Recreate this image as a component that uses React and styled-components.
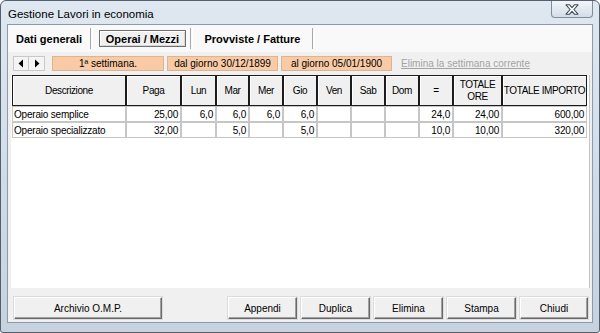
import React from "react";
import styled, { createGlobalStyle } from "styled-components";

const font = `"Liberation Sans", Arial, sans-serif`;

const GlobalStyle = createGlobalStyle`
  html, body {
    margin: 0;
    padding: 0;
    background: #ffffff;
  }
  body {
    font-family: ${font};
    font-size: 10px;
    color: #000;
  }
`;

const Window = styled.div`
  width: 600px;
  height: 333px;
  box-sizing: border-box;
  border: 1px solid #55606e;
  border-radius: 6px 6px 3px 3px;
  background: linear-gradient(180deg, #dfe8f0 0%, #cfdce8 55%, #c6d3df 100%);
  padding: 0 6px 9px 6px;
  display: flex;
  flex-direction: column;
  overflow: hidden;
`;

const TitleBar = styled.div`
  height: 23px;
  display: flex;
  align-items: flex-start;
  justify-content: space-between;
`;

const Title = styled.div`
  font-size: 11.5px;
  padding: 7px 0 0 1px;
  color: #000;
`;

const CloseBtn = styled.div`
  width: 42px;
  height: 17px;
  box-sizing: border-box;
  border: 1px solid #7f8c9c;
  border-top: none;
  border-radius: 0 0 4px 4px;
  background: linear-gradient(180deg, #f3f6f9 0%, #e2e9f0 50%, #d3dde7 100%);
  display: flex;
  align-items: center;
  justify-content: center;
`;

const Client = styled.div`
  flex: 1;
  border: 1px solid #8d9aa9;
  background: #f0f0f0;
  display: flex;
  flex-direction: column;
  min-height: 0;
`;

const TabStrip = styled.div`
  height: 27px;
  background: #f9f9f9;
  display: flex;
  align-items: center;
`;

const Tab = styled.div`
  width: ${(p) => p.w}px;
  display: flex;
  justify-content: center;
  align-items: center;
  font-size: 11px;
  font-weight: bold;
  height: 100%;
`;

const ActiveTab = styled.div`
  margin: 0 4px 0 6px;
  width: 87px;
  height: 17px;
  box-sizing: border-box;
  border: 1px solid #6f6f6f;
  box-shadow: inset 1px 1px 0 #ffffff, inset -1px -1px 0 #d8d8d8;
  background: #f0f0f0;
  display: flex;
  align-items: center;
  justify-content: center;
  font-size: 11px;
  font-weight: bold;
`;

const Sep = styled.div`
  width: 1px;
  height: 21px;
  border-left: 1px solid #a9a9a9;
  border-right: 1px solid #ffffff;
`;

const NavRow = styled.div`
  display: flex;
  align-items: center;
  height: 15px;
  margin: 4px 0 4px 5px;
`;

const Arrows = styled.div`
  display: flex;
  margin-right: 7px;
`;

const ArrowBtn = styled.div`
  width: 16px;
  height: 15px;
  box-sizing: border-box;
  border: 1px solid #c9c9c9;
  border-left: ${(p) => (p.right ? "none" : "1px solid #c9c9c9")};
  background: #f4f4f4;
  display: flex;
  align-items: center;
  justify-content: center;
`;

const InfoBox = styled.div`
  width: ${(p) => p.w}px;
  height: 15px;
  box-sizing: border-box;
  margin-right: 3px;
  border: 1px solid #ddb48f;
  background: #f8cba6;
  display: flex;
  align-items: center;
  justify-content: center;
  font-size: 10px;
`;

const Link = styled.span`
  margin-left: 6px;
  color: #a3a3a3;
  text-decoration: underline;
  font-size: 10px;
`;

const GridPanel = styled.div`
  flex: 1;
  margin: 0 2px 0 3px;
  background: #ffffff;
  border-right: 1px solid #c4c4c4;
  min-height: 0;
`;

const Grid = styled.div`
  display: grid;
  grid-template-columns: 114px 55px 35px 33px 34px 34px 34px 34px 34px 34px 49px 85px;
  grid-template-rows: 31px 16px 16px;
  width: max-content;
  margin-left: 1px;
`;

const HeadCell = styled.div`
  box-sizing: border-box;
  border: 1px solid #1c1c1c;
  box-shadow: inset 1px 1px 0 #ffffff;
  background: #f0f0f0;
  display: flex;
  align-items: center;
  justify-content: center;
  text-align: center;
  line-height: 12px;
  font-size: 10px;
  letter-spacing: -0.4px;
  white-space: nowrap;
`;

const Cell = styled.div`
  box-sizing: border-box;
  border: 1px solid #c6c6c6;
  display: flex;
  align-items: center;
  justify-content: ${(p) => (p.left ? "flex-start" : "flex-end")};
  padding: ${(p) => (p.left ? "0 0 0 1px" : "0 2px 0 0")};
  font-size: 10px;
  letter-spacing: -0.2px;
  white-space: nowrap;
`;

const BottomBar = styled.div`
  height: 34px;
  display: flex;
  align-items: flex-start;
  padding: 9px 4px 0 6px;
  box-sizing: border-box;
  gap: 4px;
`;

const Button = styled.div`
  width: ${(p) => p.w}px;
  height: 22px;
  box-sizing: border-box;
  margin-left: ${(p) => p.ml || 0}px;
  border-top: 1px solid #ffffff;
  border-left: 1px solid #ffffff;
  border-right: 1px solid #6a6a6a;
  border-bottom: 1px solid #6a6a6a;
  box-shadow: inset -1px -1px 0 #a0a0a0, 0 0 0 1px #dcdcdc;
  background: #f0f0f0;
  display: flex;
  align-items: center;
  justify-content: center;
  font-size: 10px;
`;

const headers = [
  "Descrizione",
  "Paga",
  "Lun",
  "Mar",
  "Mer",
  "Gio",
  "Ven",
  "Sab",
  "Dom",
  "=",
  "TOTALE\nORE",
  "TOTALE IMPORTO",
];

const rows = [
  ["Operaio semplice", "25,00", "6,0", "6,0", "6,0", "6,0", "", "", "", "24,0", "24,00", "600,00"],
  ["Operaio specializzato", "32,00", "", "5,0", "", "5,0", "", "", "", "10,0", "10,00", "320,00"],
];

const CloseIcon = () => (
  <svg width="14" height="11" viewBox="0 0 14 11">
    <path
      d="M1 0.8 H4.6 L7 3.6 L9.4 0.8 H13 L8.9 5.5 L13 10.2 H9.4 L7 7.4 L4.6 10.2 H1 L5.1 5.5 Z"
      fill="#ffffff"
      stroke="#3f4a57"
      strokeWidth="1.1"
      strokeLinejoin="round"
    />
  </svg>
);

const Triangle = ({ right }) => (
  <svg width="6" height="9" viewBox="0 0 6 9">
    <path d={right ? "M1 0.5 L5.5 4.5 L1 8.5 Z" : "M5 0.5 L0.5 4.5 L5 8.5 Z"} fill="#000" />
  </svg>
);

export default function App() {
  return (
    <>
      <GlobalStyle />
      <Window>
        <TitleBar>
          <Title>Gestione Lavori in economia</Title>
          <CloseBtn>
            <CloseIcon />
          </CloseBtn>
        </TitleBar>
        <Client>
          <TabStrip>
            <Tab w={82}>Dati generali</Tab>
            <Sep />
            <ActiveTab>Operai / Mezzi</ActiveTab>
            <Sep />
            <Tab w={119}>Provviste / Fatture</Tab>
            <Sep />
          </TabStrip>
          <NavRow>
            <Arrows>
              <ArrowBtn>
                <Triangle />
              </ArrowBtn>
              <ArrowBtn right>
                <Triangle right />
              </ArrowBtn>
            </Arrows>
            <InfoBox w={112}>1ª settimana.</InfoBox>
            <InfoBox w={111}>dal giorno 30/12/1899</InfoBox>
            <InfoBox w={111}>al giorno 05/01/1900</InfoBox>
            <Link>Elimina la settimana corrente</Link>
          </NavRow>
          <GridPanel>
            <Grid>
              {headers.map((h) => (
                <HeadCell key={h}>
                  {h.split("\n").map((line, i) => (
                    <React.Fragment key={i}>
                      {i > 0 && <br />}
                      {line}
                    </React.Fragment>
                  ))}
                </HeadCell>
              ))}
              {rows.map((r, ri) =>
                r.map((v, ci) => (
                  <Cell key={`${ri}-${ci}`} left={ci === 0}>
                    {v}
                  </Cell>
                ))
              )}
            </Grid>
          </GridPanel>
          <BottomBar>
            <Button w={148}>Archivio O.M.P.</Button>
            <Button w={69} ml={62}>Appendi</Button>
            <Button w={69}>Duplica</Button>
            <Button w={69}>Elimina</Button>
            <Button w={69}>Stampa</Button>
            <Button w={68}>Chiudi</Button>
          </BottomBar>
        </Client>
      </Window>
    </>
  );
}
